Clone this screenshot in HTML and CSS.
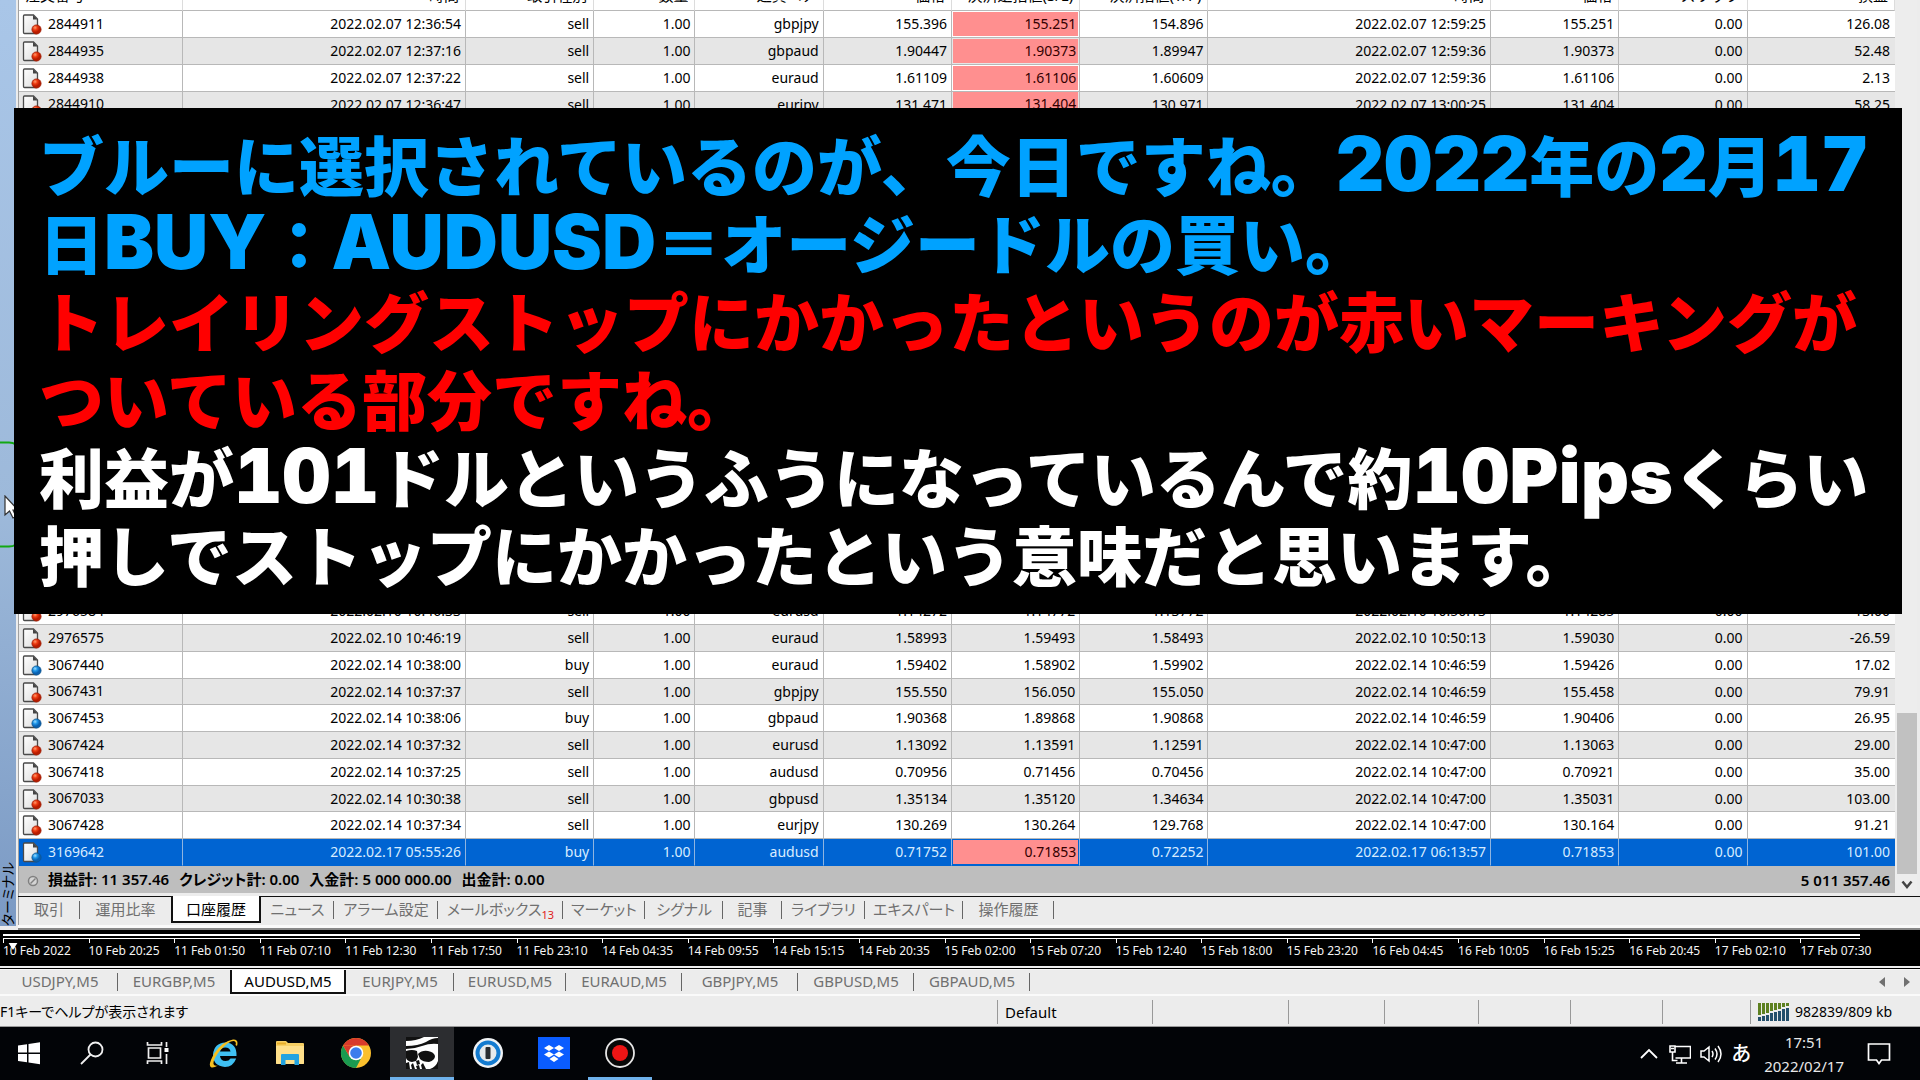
FILE: index.html
```html
<!DOCTYPE html>
<html lang="ja">
<head>
    <meta charset="UTF-8">
    <meta name="viewport" content="width=device-width, initial-scale=1.0">
    <title>口座履歴</title>
    <link rel="stylesheet" href="styles.css">
</head>
<body>
    <svg class="defs" aria-hidden="true">
        <defs>
            <radialGradient id="red" cx="35%" cy="30%"><stop offset="0" stop-color="#ff9a6a"/><stop offset=".5" stop-color="#ee3a10"/><stop offset="1" stop-color="#b81c00"/></radialGradient>
            <radialGradient id="blue" cx="35%" cy="30%"><stop offset="0" stop-color="#9adcff"/><stop offset=".5" stop-color="#1c94e8"/><stop offset="1" stop-color="#0a5fae"/></radialGradient>
            <linearGradient id="paper" x1="0" x2="1" y2="1"><stop offset="0" stop-color="#ffffff"/><stop offset="1" stop-color="#dcdcdc"/></linearGradient>
            <symbol id="doc" viewBox="0 0 20 21">
                <path d="M2.500 1h9l4 4v13.500q0 1-1 1h-12q-1 0-1-1V2q0-1 1-1z" fill="url(#paper)" stroke="#4a4a4a" stroke-width="1.300"/>
                <path d="M11 1v4.500h4.500z" fill="#444"/>
            </symbol>
            <symbol id="sell" viewBox="0 0 20 21"><use href="#doc"/><circle cx="14.500" cy="15.500" r="4.600" fill="url(#red)" stroke="#a02008" stroke-width=".8"/></symbol>
            <symbol id="buy" viewBox="0 0 20 21"><use href="#doc"/><circle cx="14.500" cy="15.500" r="4.600" fill="url(#blue)" stroke="#0c558f" stroke-width=".8"/></symbol>
        </defs>
    </svg>

    <main class="terminal">
        <div class="side">
            <svg class="side-line" viewBox="0 0 16 107" preserveAspectRatio="none" aria-hidden="true"><path d="M0 1.500h9q4 0 7 2M0 105.500h9q4 0 7-2" fill="none" stroke="#12a812" stroke-width="2"/></svg>
            <span class="side-title">ターミナル</span>
        </div>
        <div class="terminal-main">
            <div class="history">
                <table class="orders">
                    <colgroup>
                        <col class="c-id"><col class="c-time"><col class="c-std"><col class="c-size"><col class="c-std"><col class="c-std">
                        <col class="c-std"><col class="c-std"><col class="c-time"><col class="c-std"><col class="c-std"><col class="c-profit">
                    </colgroup>
                    <thead>
                        <tr>
                            <th><div>注文番号</div></th>
                            <th><div>時間</div></th>
                            <th><div>取引種別</div></th>
                            <th><div>数量</div></th>
                            <th><div>通貨ペア</div></th>
                            <th><div>価格</div></th>
                            <th><div>決済逆指値(S/L)</div></th>
                            <th><div>決済指値(T/P)</div></th>
                            <th><div>時間</div></th>
                            <th><div>価格</div></th>
                            <th><div>スワップ</div></th>
                            <th><div>損益</div></th>
                        </tr>
                    </thead>
                    <tbody>
                        <tr><td><svg><use href="#sell"/></svg>2844911</td><td>2022.02.07 12:36:54</td><td>sell</td><td>1.00</td><td>gbpjpy</td><td>155.396</td><td class="sl"><span>155.251</span></td><td>154.896</td><td>2022.02.07 12:59:25</td><td>155.251</td><td>0.00</td><td>126.08</td></tr>
                        <tr><td><svg><use href="#sell"/></svg>2844935</td><td>2022.02.07 12:37:16</td><td>sell</td><td>1.00</td><td>gbpaud</td><td>1.90447</td><td class="sl"><span>1.90373</span></td><td>1.89947</td><td>2022.02.07 12:59:36</td><td>1.90373</td><td>0.00</td><td>52.48</td></tr>
                        <tr><td><svg><use href="#sell"/></svg>2844938</td><td>2022.02.07 12:37:22</td><td>sell</td><td>1.00</td><td>euraud</td><td>1.61109</td><td class="sl"><span>1.61106</span></td><td>1.60609</td><td>2022.02.07 12:59:36</td><td>1.61106</td><td>0.00</td><td>2.13</td></tr>
                        <tr><td><svg><use href="#sell"/></svg>2844910</td><td>2022.02.07 12:36:47</td><td>sell</td><td>1.00</td><td>eurjpy</td><td>131.471</td><td class="sl"><span>131.404</span></td><td>130.971</td><td>2022.02.07 13:00:25</td><td>131.404</td><td>0.00</td><td>58.25</td></tr>
                    </tbody>
                    <tbody class="spacer"><tr><td colspan="12"></td></tr></tbody>
                    <tbody>
                        <tr><td><svg><use href="#sell"/></svg>2976584</td><td>2022.02.10 10:46:33</td><td>sell</td><td>1.00</td><td>eurusd</td><td>1.14272</td><td>1.14772</td><td>1.13772</td><td>2022.02.10 10:50:13</td><td>1.14285</td><td>0.00</td><td>-13.00</td></tr>
                        <tr><td><svg><use href="#sell"/></svg>2976575</td><td>2022.02.10 10:46:19</td><td>sell</td><td>1.00</td><td>euraud</td><td>1.58993</td><td>1.59493</td><td>1.58493</td><td>2022.02.10 10:50:13</td><td>1.59030</td><td>0.00</td><td>-26.59</td></tr>
                        <tr><td><svg><use href="#buy"/></svg>3067440</td><td>2022.02.14 10:38:00</td><td>buy</td><td>1.00</td><td>euraud</td><td>1.59402</td><td>1.58902</td><td>1.59902</td><td>2022.02.14 10:46:59</td><td>1.59426</td><td>0.00</td><td>17.02</td></tr>
                        <tr><td><svg><use href="#sell"/></svg>3067431</td><td>2022.02.14 10:37:37</td><td>sell</td><td>1.00</td><td>gbpjpy</td><td>155.550</td><td>156.050</td><td>155.050</td><td>2022.02.14 10:46:59</td><td>155.458</td><td>0.00</td><td>79.91</td></tr>
                        <tr><td><svg><use href="#buy"/></svg>3067453</td><td>2022.02.14 10:38:06</td><td>buy</td><td>1.00</td><td>gbpaud</td><td>1.90368</td><td>1.89868</td><td>1.90868</td><td>2022.02.14 10:46:59</td><td>1.90406</td><td>0.00</td><td>26.95</td></tr>
                        <tr><td><svg><use href="#sell"/></svg>3067424</td><td>2022.02.14 10:37:32</td><td>sell</td><td>1.00</td><td>eurusd</td><td>1.13092</td><td>1.13591</td><td>1.12591</td><td>2022.02.14 10:47:00</td><td>1.13063</td><td>0.00</td><td>29.00</td></tr>
                        <tr><td><svg><use href="#sell"/></svg>3067418</td><td>2022.02.14 10:37:25</td><td>sell</td><td>1.00</td><td>audusd</td><td>0.70956</td><td>0.71456</td><td>0.70456</td><td>2022.02.14 10:47:00</td><td>0.70921</td><td>0.00</td><td>35.00</td></tr>
                        <tr><td><svg><use href="#sell"/></svg>3067033</td><td>2022.02.14 10:30:38</td><td>sell</td><td>1.00</td><td>gbpusd</td><td>1.35134</td><td>1.35120</td><td>1.34634</td><td>2022.02.14 10:47:00</td><td>1.35031</td><td>0.00</td><td>103.00</td></tr>
                        <tr><td><svg><use href="#sell"/></svg>3067428</td><td>2022.02.14 10:37:34</td><td>sell</td><td>1.00</td><td>eurjpy</td><td>130.269</td><td>130.264</td><td>129.768</td><td>2022.02.14 10:47:00</td><td>130.164</td><td>0.00</td><td>91.21</td></tr>
                        <tr class="selected"><td><svg><use href="#buy"/></svg>3169642</td><td>2022.02.17 05:55:26</td><td>buy</td><td>1.00</td><td>audusd</td><td>0.71752</td><td class="sl"><span>0.71853</span></td><td>0.72252</td><td>2022.02.17 06:13:57</td><td>0.71853</td><td>0.00</td><td>101.00</td></tr>
                    </tbody>
                    <tfoot>
                        <tr>
                            <td colspan="10"><svg viewBox="0 0 20 21"><circle cx="11" cy="11" r="4.500" fill="#d4d4d4" stroke="#808080" stroke-width="1.500"/><path d="M8.500 13.500l5-5" stroke="#808080" stroke-width="1.500"/></svg><span>損益計: 11 357.46</span><span>クレジット計: 0.00</span><span>入金計: 5 000 000.00</span><span>出金計: 0.00</span></td>
                            <td colspan="2">5 011 357.46</td>
                        </tr>
                    </tfoot>
                </table>
                <div class="scrollbar">
                    <div class="thumb"></div>
                    <button class="scroll-down" aria-label="下へ"><svg viewBox="0 0 12 10"><path d="M1.500 1.500L6 7l4.500-5.500" fill="none" stroke="#444" stroke-width="2.500"/></svg></button>
                </div>
            </div>
            <nav class="terminal-tabs">
                <button>取引</button>
                <button>運用比率</button>
                <button class="active">口座履歴</button>
                <button>ニュース</button>
                <button>アラーム設定</button>
                <button>メールボックス<sub>13</sub></button>
                <button>マーケット</button>
                <button>シグナル</button>
                <button>記事</button>
                <button>ライブラリ</button>
                <button>エキスパート</button>
                <button>操作履歴</button>
            </nav>
        </div>
    </main>

    <section class="chart-axis">
        <div class="axis-line"></div>
        <svg class="shift" viewBox="0 0 10 8" aria-hidden="true"><path d="M0 0h10L5 8z" fill="#fff"/></svg>
        <ol class="axis-labels">
            <li>10 Feb 2022</li>
            <li>10 Feb 20:25</li>
            <li>11 Feb 01:50</li>
            <li>11 Feb 07:10</li>
            <li>11 Feb 12:30</li>
            <li>11 Feb 17:50</li>
            <li>11 Feb 23:10</li>
            <li>14 Feb 04:35</li>
            <li>14 Feb 09:55</li>
            <li>14 Feb 15:15</li>
            <li>14 Feb 20:35</li>
            <li>15 Feb 02:00</li>
            <li>15 Feb 07:20</li>
            <li>15 Feb 12:40</li>
            <li>15 Feb 18:00</li>
            <li>15 Feb 23:20</li>
            <li>16 Feb 04:45</li>
            <li>16 Feb 10:05</li>
            <li>16 Feb 15:25</li>
            <li>16 Feb 20:45</li>
            <li>17 Feb 02:10</li>
            <li>17 Feb 07:30</li>
        </ol>
    </section>

    <nav class="chart-tabs">
        <button>USDJPY,M5</button>
        <button>EURGBP,M5</button>
        <button class="active">AUDUSD,M5</button>
        <button>EURJPY,M5</button>
        <button>EURUSD,M5</button>
        <button>EURAUD,M5</button>
        <button>GBPJPY,M5</button>
        <button>GBPUSD,M5</button>
        <button>GBPAUD,M5</button>
        <div class="tab-arrows">
            <button aria-label="前へ"><svg viewBox="0 0 6 10"><path d="M6 0v10L0 5z" fill="#707070"/></svg></button>
            <button aria-label="次へ"><svg viewBox="0 0 6 10"><path d="M0 0v10l6-5z" fill="#707070"/></svg></button>
        </div>
    </nav>

    <footer class="status">
        <span class="help">F1キーでヘルプが表示されます</span>
        <span>Default</span>
        <span></span>
        <span></span>
        <span></span>
        <span></span>
        <span></span>
        <span></span>
        <span class="traffic">
            <svg viewBox="0 0 32 18" aria-hidden="true">
                <path d="M1.500 0v12M5.500 0v11M9.500 0v10M13.500 0v8M17.500 0v7M21.500 0v6M25.500 0v4M29.500 0v3" stroke="#5d8020" stroke-width="3"/>
                <path d="M1.500 14v4M5.500 13v5M9.500 12v6M13.500 10v8M17.500 9v9M21.500 8v10M25.500 6v12M29.500 5v13" stroke="#24506c" stroke-width="3"/>
            </svg>
            982839/809 kb
        </span>
    </footer>

    <footer class="taskbar">
        <div class="apps">
            <button class="start" aria-label="スタート"><svg viewBox="0 0 32 32"><path d="M5 8.500l9-1.300v8.300H5zM15.500 7L27 5.300v10.200H15.500zM5 17h9v8.300l-9-1.300zM15.500 17H27v10.200l-11.500-1.700z" fill="#fff"/></svg></button>
            <button aria-label="検索"><svg viewBox="0 0 32 32"><g fill="none" stroke="#f0f0f0" stroke-width="1.800"><circle cx="19.500" cy="12.500" r="7"/><path d="M14.500 17.500L5 27"/></g></svg></button>
            <button aria-label="タスクビュー"><svg viewBox="0 0 32 32"><g fill="none" stroke="#f0f0f0" stroke-width="1.700"><path d="M6.500 11h12v10h-12zM5.500 5v3h14V5M5.500 27v-3h14v3M24.500 5v5M24.500 17v10"/></g><path d="M22.500 11h4v4h-4z" fill="#fff"/></svg></button>
            <button aria-label="Internet Explorer"><svg viewBox="0 0 32 32"><path d="M28.500 19H12q.6 5 5.500 5 3.500 0 5-2.500h5.700Q25 30 17 30 5 29 5 17.500 6 6 17.500 5.500 29 6 28.500 19zM12 14.500h10.500Q21.800 10.500 17.300 10.500 13 10.500 12 14.500z" fill="#3fc0f2"/><path d="M29 9q2-7-4-6.500Q15 4 6.500 16-1 29 3.500 30.500 6 31 10 28.500 6 29.500 5.500 27 5 22 12 13.500 22 3 26.500 4.200 28.500 5 27.500 8z" fill="#f4c022"/></svg></button>
            <button aria-label="エクスプローラー"><svg viewBox="0 0 32 32"><path d="M2 5q0-1 1-1h9l2 2h15q1 0 1 1v19q0 1-1 1H3q-1 0-1-1z" fill="#f7cf63"/><path d="M3 5.500h9v2H3z" fill="#e6ad28"/><path d="M2 9h28v17q0 1-1 1H3q-1 0-1-1z" fill="#ffe08a"/><path d="M7 28V18q0-1 1-1h16q1 0 1 1v10h-4.500v-5h-9v5z" fill="#23a3e0"/></svg></button>
            <button aria-label="Google Chrome"><svg viewBox="0 0 32 32"><circle cx="16" cy="16" r="15" fill="#fbc02d"/><path d="M3 8.500A15 15 0 0 1 29 8.500H16z" fill="#d93a2b"/><path d="M3 8.500A15 15 0 0 0 16 31l6-11.500-12.500 0z" fill="#1a9a50"/><path d="M3 8.500L9.500 19.500 16 8.500z" fill="#d93a2b"/><circle cx="16" cy="16" r="7.300" fill="#fff"/><circle cx="16" cy="16" r="5.800" fill="#3b7ded"/></svg></button>
            <button class="current" aria-label="MetaTrader"><svg viewBox="0 0 32 32"><path d="M0 0h32v32H0z" fill="#fff"/><path d="M0 0h18Q10 4 0 4zM32 1v6Q24 6 16 9 8 12 0 12V9Q12 9 20 5 26 1 32 1zM0 14q6-2 11 0l1 6-2 4-4 1q-5-1-6-4zM12 17q4-4 10-3 6 1 7 5 0 4-6 6-6 0-9-3zM10 24l3-1 1 4-3 1zM0 26l3-1 1 7H0zM5 28l2-2 2 6H6zM10 29l3-1 1 4h-3zM15 28l2-2 3 6h-4zM32 24v8h-8q6-2 8-8z" fill="#111"/></svg></button>
            <button aria-label="1Password"><svg viewBox="0 0 32 32"><circle cx="16" cy="16" r="15" fill="#f0f3f5"/><circle cx="16" cy="16" r="10.500" fill="#e6eaec" stroke="#137bd0" stroke-width="4"/><rect x="13.500" y="10" width="5" height="12" rx="1" fill="#292d31"/></svg></button>
            <button aria-label="Dropbox"><svg viewBox="0 0 32 32"><path d="M0 0h32v32H0z" fill="#0a5cff"/><path d="M11 8l5 3-5 3-5-3zM21 8l5 3-5 3-5-3zM11 14.500l5 3-5 3-5-3zM21 14.500l5 3-5 3-5-3zM16 19l4.500 3-4.500 3-4.500-3z" fill="#fff"/></svg></button>
            <button class="running" aria-label="録画"><svg viewBox="0 0 32 32"><circle cx="16" cy="16" r="14" fill="#080808" stroke="#e6e6e6" stroke-width="1.800"/><circle cx="16" cy="16" r="8" fill="#ee1515"/></svg></button>
        </div>
        <div class="tray">
            <svg class="icon-s" viewBox="0 0 22 22"><path d="M3 15l8-8 8 8" fill="none" stroke="#fff" stroke-width="1.800"/></svg>
            <svg class="icon-s" viewBox="0 0 22 22"><path d="M6.500 3.500h15V15h-15M7 20h11M12.500 15v5M1 3h5v6H1zM3.500 9v8.500h5M2 5.500h3" fill="none" stroke="#fff" stroke-width="1.600"/></svg>
            <svg class="icon-s" viewBox="0 0 22 22"><path d="M1 8v6h3l5 4V4L4 8zM12 8q2 3 0 6M15 5.500q4 5.500 0 11M18 3q6 8 0 16" fill="none" stroke="#fff" stroke-width="1.500"/></svg>
            <span class="ime">あ</span>
            <time class="clock">17:51<br>2022/02/17</time>
            <svg class="icon-m" viewBox="0 0 24 24"><path d="M1.500 2h21v16h-8L12 21.500 9.500 18h-8z" fill="none" stroke="#fff" stroke-width="1.700"/></svg>
        </div>
    </footer>

    <svg class="cursor" viewBox="0 0 14 24" aria-hidden="true"><path d="M1 1v19l4.500-4 3.500 7 3-1.500L9 15h5z" fill="#fff" stroke="#333" stroke-width="1.200"/></svg>

    <div class="caption">
        <p class="c-blue">ブルーに選択されているのが、今日ですね。<b>2022</b>年の<b>2</b>月<b>17</b><br>日<b>BUY</b>：<b>AUDUSD</b>＝オージードルの買い。</p>
        <p class="c-red">トレイリングストップにかかったというのが赤いマーキングが<br>ついている部分ですね。</p>
        <p class="c-white">利益が<b>101</b>ドルというふうになっているんで約<b>10Pips</b>くらい<br>押しでストップにかかったという意味だと思います。</p>
    </div>
</body>
</html>
```
FILE: styles.css
```css
* { box-sizing: border-box; }
body { margin: 0; height: 100vh; display: flex; flex-direction: column; overflow: hidden; position: relative; background: #ececec; color: #000; font-family: "Noto Sans", "Noto Sans CJK JP", sans-serif; font-size: 14px; }
button { border: 0; padding: 0; background: none; font: inherit; color: inherit; white-space: nowrap; }
.defs { position: absolute; width: 0; height: 0; }

/* terminal */
.terminal { flex: 1; min-height: 0; display: flex; }
.side { width: 16px; margin-bottom: 4px; display: flex; flex-direction: column; justify-content: flex-end; background: linear-gradient(#a9c6e8, #9db9da 55%, #7b9ac4); position: relative; }
.side-line { position: absolute; left: 0; top: 441px; width: 16px; height: 107px; }
.side-title { writing-mode: vertical-rl; text-orientation: sideways; transform: rotate(180deg); line-height: 16px; font-size: 14px; font-feature-settings: "palt"; white-space: nowrap; }
.terminal-main { flex: 1; min-width: 0; display: flex; flex-direction: column; margin-left: 2px; border-left: 1px solid #a0a0a0; }
.history { flex: 1; min-height: 0; display: flex; align-items: flex-start; padding-bottom: 2px; padding-right: 3px; }

.orders { flex: 1; table-layout: fixed; border-collapse: separate; border-spacing: 0; background: #fff; white-space: nowrap; }
.c-id { width: 164px; }
.c-time { width: 282px; }
.c-std { width: 128px; }
.c-size { width: 101px; }
.c-profit { width: 147px; }
.orders th { height: 11px; padding: 0 6px; border-right: 1px solid #dcdcdc; border-bottom: 1px solid #b8b8b8; font-weight: normal; font-size: 15px; }
.orders th div { height: 10px; display: flex; align-items: flex-end; justify-content: flex-end; line-height: 30px; overflow: hidden; }
.orders th:first-child div { justify-content: flex-start; }
.orders td { height: 27px; padding: 0 4px 0 0; border-right: 1px solid #b8b8b8; border-bottom: 1px solid #b8b8b8; text-align: right; line-height: 22px; }
.orders tr:nth-child(4n) td { height: 26px; }
.orders tbody tr:nth-child(even) { background: #e6e6e6; }
.orders td:first-child { text-align: left; padding-left: 3px; }
.orders td:last-child { padding-right: 5px; border-right: 0; }
.orders td svg { width: 20px; height: 21px; margin-right: 6px; vertical-align: middle; }
.orders tbody.spacer td { height: 480px; }
.orders td.sl { padding: 0 1px 1px 1px; }
.sl span { display: block; line-height: 24px; padding-right: 2px; background: #ff8f8f; color: #300; }
.orders tbody tr.selected { background: #0064d2; color: #d8ecff; }
.orders .selected td { border-bottom-color: #0064d2; border-right-color: #8fb4e0; }
.orders tfoot td { border: 0; background: #bebebe; font-size: 15px; font-weight: 600; text-align: right; }
.orders tfoot span { margin-right: 10px; font-feature-settings: "palt"; }

.scrollbar { width: 22px; align-self: stretch; display: flex; flex-direction: column; justify-content: flex-end; padding-left: 2px; background: #ededed; }
.thumb { height: 18%; background: #c1c1c1; }
.scroll-down { height: 20px; }
.scroll-down svg { width: 12px; height: 10px; }

.terminal-tabs { height: 34px; display: grid; grid-template-columns: 62px 91px 90px 73px 104px 125px 82px 78px 59px 83px 98px 91px; border-top: 1px solid #111; border-bottom: 2px solid #888; box-shadow: inset 0 -3px #fafafa; margin-left: -1px; font-size: 15px; font-feature-settings: "palt"; color: #707070; }
.terminal-tabs button { height: 26px; padding-bottom: 4px; background: linear-gradient(#666, #666) right center / 1px 18px no-repeat; }
.terminal-tabs button:nth-child(2) { background: none; }
.terminal-tabs .active { background: #fff; color: #000; border: solid #111; border-width: 0 2px 2px; margin-top: -1px; height: 27px; padding-bottom: 1px; }
.terminal-tabs sub { font-size: 11px; color: #e02020; line-height: 0; }

/* time axis */
.chart-axis { height: 39px; padding-top: 1px; position: relative; background: #000; border-bottom: 1px solid #000; box-shadow: inset 0 -2px #eee; }
.axis-line { height: 5px; margin: 3px 60px 0 3px; border-top: 2px solid #fff; border-bottom: 1px solid #fff; }
.axis-labels { margin: 0 34px 0 3px; padding: 0; list-style: none; display: grid; grid-template-columns: repeat(22, 1fr); color: #f4f4f4; font-size: 12px; line-height: 15px; white-space: nowrap; }
.axis-labels li { min-width: 0; }
.axis-labels li::before { content: ""; display: block; width: 1px; height: 4px; background: #fff; }
.shift { position: absolute; left: 8px; top: 13px; width: 10px; height: 7px; }

/* chart tabs */
.chart-tabs { height: 27px; display: flex; padding-left: 2px; border-top: 1px solid #fafafa; border-bottom: 2px solid #fafafa; font-size: 15px; color: #707070; }
.chart-tabs > button { width: 116px; height: 24px; padding-bottom: 2px; background: linear-gradient(#666, #666) right center / 1px 18px no-repeat; }
.chart-tabs > button:nth-child(2) { width: 112px; background: none; }
.chart-tabs > button:nth-child(4) { width: 108px; }
.chart-tabs > button:nth-child(5) { width: 112px; }
.chart-tabs > .active { background: #fff; color: #000; border: solid #111; border-width: 0 2px 2px; padding-bottom: 0; }
.tab-arrows { margin-left: auto; margin-right: 10px; display: flex; gap: 19px; align-items: center; }
.tab-arrows svg { width: 6px; height: 10px; display: block; }

/* status bar */
.status { height: 31px; display: grid; grid-template-columns: 1fr 155px 136px 96px 94px 92px 92px 88px 170px; padding: 4px 0 2px; border-bottom: 1px solid #999; font-size: 15px; line-height: 24px; white-space: nowrap; }
.status span { border-left: 1px solid #999; padding-left: 7px; }
.status .help { border: 0; padding: 0; font-size: 14px; font-feature-settings: "palt"; }
.status .traffic { display: flex; align-items: center; gap: 5px; font-size: 14px; }
.traffic svg { width: 32px; height: 18px; }

/* taskbar */
.taskbar { height: 53px; display: flex; justify-content: space-between; background: #020407; color: #fff; }
.apps { display: flex; gap: 2px; }
.apps button { width: 64px; display: flex; align-items: center; justify-content: center; border-bottom: 3px solid transparent; padding-top: 2px; }
.apps .start { width: 58px; }
.apps svg { width: 32px; height: 32px; }
.apps .current { background: #2c2d30; border-color: #6fb2ec; }
.apps .running { border-color: #6fb2ec; }
.tray { display: flex; align-items: center; gap: 9px; padding-right: 29px; }
.icon-s { width: 22px; height: 22px; }
.icon-m { width: 24px; height: 24px; margin-left: 14px; }
.ime { font-size: 20px; font-weight: 500; line-height: 24px; }
.clock { margin-left: 4px; font-size: 15px; line-height: 24px; text-align: center; color: #e8e8e8; }

.cursor { position: absolute; left: 4px; top: 495px; width: 14px; height: 24px; }

/* caption laid over the window */
.caption { position: absolute; left: 14px; right: 18px; top: 108px; padding: 16px 0 22px 25px; background: #000; font-family: "Noto Sans CJK JP", sans-serif; font-size: 65px; font-weight: 900; line-height: 78px; white-space: nowrap; }
.caption p { margin: 0; }
.caption b { font-family: Inter, sans-serif; font-size: 75px; font-weight: 900; font-variant-numeric: tabular-nums; line-height: 1px; }
.c-blue { color: #00a2ff; }
.c-red { color: #f00; }
.c-white { color: #fff; }
```
